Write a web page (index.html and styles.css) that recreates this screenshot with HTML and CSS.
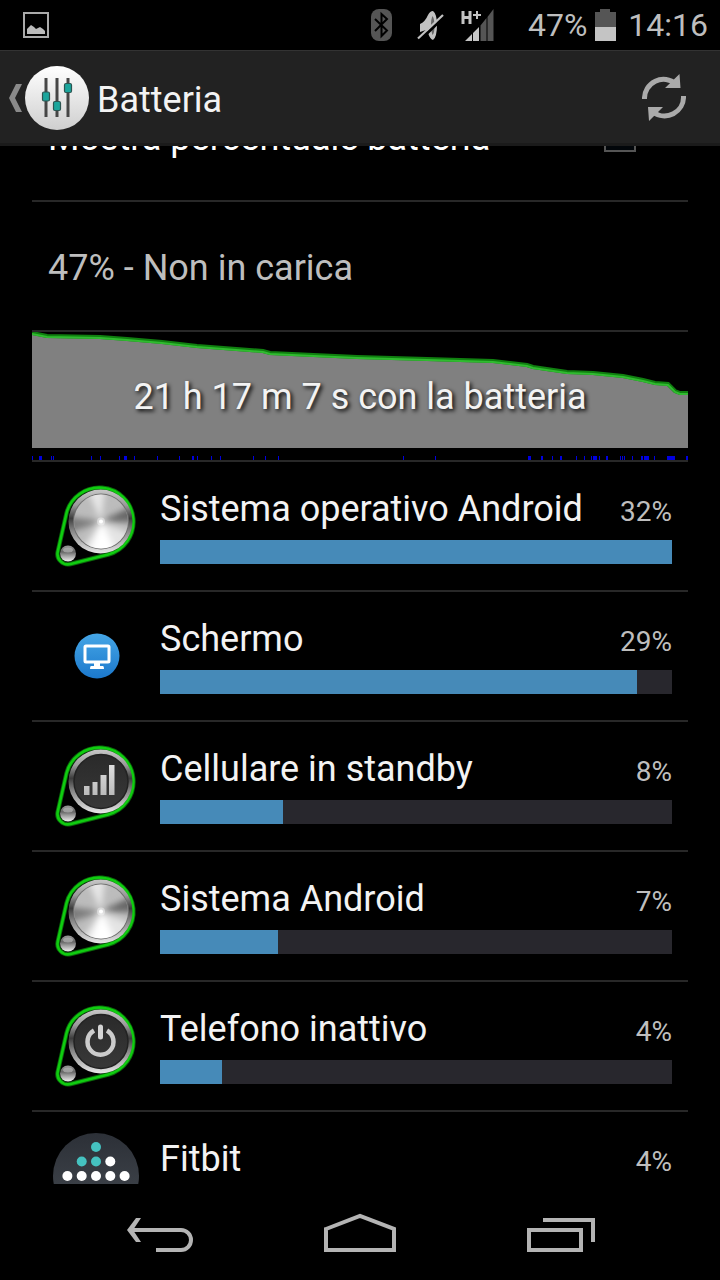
FILE: index.html
```html
<!DOCTYPE html>
<html lang="it">
<head>
  <meta charset="UTF-8" />
  <meta name="viewport" content="width=device-width, initial-scale=1.0"/>
  <title>Batteria</title>
  <link rel="stylesheet" href="styles.css">
</head>
<body>
  <!-- Shared icon parts -->
  <svg class="defs" width="0" height="0" aria-hidden="true">
    <defs>
      <linearGradient id="ring" x1="0" y1="0" x2="0" y2="1">
        <stop offset="0" stop-color="#c8c8c8"/>
        <stop offset="0.25" stop-color="#999"/>
        <stop offset="0.45" stop-color="#3c3c3c"/>
        <stop offset="0.65" stop-color="#888"/>
        <stop offset="1" stop-color="#e8e8e8"/>
      </linearGradient>
      <linearGradient id="dark" x1="0" y1="0" x2="0" y2="1">
        <stop offset="0" stop-color="#2a2a2a"/>
        <stop offset="1" stop-color="#383838"/>
      </linearGradient>
      <linearGradient id="glyph" x1="0" y1="0" x2="0" y2="1">
        <stop offset="0" stop-color="#ddd"/>
        <stop offset="1" stop-color="#bbb"/>
      </linearGradient>
      <linearGradient id="ball" x1="0" y1="0" x2="0" y2="1">
        <stop offset="0" stop-color="#999"/>
        <stop offset="0.4" stop-color="#666"/>
        <stop offset="0.6" stop-color="#999"/>
        <stop offset="1" stop-color="#eee"/>
      </linearGradient>
      <linearGradient id="blue" x1="0" y1="0" x2="0" y2="1">
        <stop offset="0" stop-color="#45a6e6"/>
        <stop offset="1" stop-color="#1b78cc"/>
      </linearGradient>
      <linearGradient id="white" x1="0" y1="0" x2="0" y2="1">
        <stop offset="0" stop-color="#fff"/>
        <stop offset="1" stop-color="#cfcfcf"/>
      </linearGradient>
      <linearGradient id="slate" x1="0" y1="0" x2="0" y2="1">
        <stop offset="0" stop-color="#2c3037"/>
        <stop offset="1" stop-color="#444950"/>
      </linearGradient>
      <filter id="soft"><feGaussianBlur stdDeviation="3"/></filter>
      <clipPath id="disc"><circle cx="53" cy="43.5" r="27"/></clipPath>

      <symbol id="knob" viewBox="0 0 96 96">
        <path d="M18.5 35.2A34 34 0 1 1 60.2 76.5L22.6 86A10.5 10.5 0 0 1 9.8 73.4Z" fill="#000" stroke="#0a6b0a" stroke-width="4.4"/>
        <path d="M18.5 35.2A34 34 0 1 1 60.2 76.5L22.6 86A10.5 10.5 0 0 1 9.8 73.4Z" fill="none" stroke="#10cc10" stroke-width="2.6"/>
        <circle cx="52.5" cy="43.5" r="32" fill="url(#ring)"/>
        <circle cx="20" cy="75.5" r="8" fill="url(#ball)"/>
        <ellipse cx="20" cy="72" rx="5" ry="2.5" fill="#b4b4b4" opacity="0.7"/>
      </symbol>

      <symbol id="steel" viewBox="0 0 96 96">
        <circle cx="53" cy="43.5" r="28" fill="#707070"/>
        <g clip-path="url(#disc)">
          <rect x="20" y="10" width="66" height="66" fill="#bcbcbc"/>
          <g filter="url(#soft)">
            <path d="M53 43.5L18 38V56Z" fill="#7c7c7c"/>
            <path d="M53 43.5L88 26V44Z" fill="#666"/>
            <path d="M53 43.5L36 4H58Z" fill="#e6e6e6"/>
            <path d="M53 43.5L24 84H84L88 58Z" fill="#e4e4e4"/>
            <path d="M53 43.5L38 84H74Z" fill="#fff"/>
          </g>
          <circle cx="53" cy="43.5" r="4" fill="#fff" opacity="0.4"/>
          <circle cx="53" cy="43.5" r="2" fill="#fff"/>
        </g>
      </symbol>
    </defs>
  </svg>

  <!-- System status bar -->
  <div class="statusbar">
    <svg width="26" height="26" viewBox="0 0 26 26" aria-hidden="true">
      <rect x="1" y="1" width="24" height="24" fill="none" stroke="#aaa" stroke-width="2"/>
      <path d="M4 22V17L6 15L8 13L11 15L13 17L17 15L20 17L22 19V22Z" fill="#bbb"/>
    </svg>
    <div class="status-icons">
      <svg width="22" height="32" viewBox="0 0 22 32" aria-hidden="true">
        <rect width="21" height="32" rx="8" fill="#555"/>
        <path d="M4 10L16 21.5L10.5 27V5L16 10L4 22" fill="none" stroke="#000" stroke-width="2"/>
      </svg>
      <svg width="28" height="32" viewBox="0 0 28 32" aria-hidden="true">
        <path d="M3 15Q8 13 11 6Q13 2 16 2Q20 5 20 16Q20 28 16 31Q13 30 11 24L9 21L3 23Z" fill="#c2c2c2"/>
        <path d="M15.5 7Q17.5 10 17.5 17T15.5 26Q14 22 14 16T15.5 7" fill="#666"/>
        <path d="M2 32L27 8" stroke="#000" stroke-width="3"/>
        <path d="M1 29.5L26 6" stroke="#c2c2c2" stroke-width="2.2"/>
      </svg>
      <svg width="33" height="32" viewBox="0 0 33 32" aria-hidden="true">
        <path d="M2 2V15M9 2V15M2 8.5H9" stroke="#c4c4c4" stroke-width="3"/>
        <path d="M12 6H20M16 2V10" stroke="#c4c4c4" stroke-width="2"/>
        <path d="M4 32L11 25V32ZM12 24L18 18V32H12Z" fill="#c4c4c4"/>
        <path d="M19.5 16.5L25.5 9V32H19.5ZM26.5 8L32.5 0V32H26.5Z" fill="#555"/>
      </svg>
      <div class="charge">
        <span>47%</span>
        <svg width="21" height="32" viewBox="0 0 21 32" aria-hidden="true">
          <path d="M0 3H5V0H15V3H21V32H0Z" fill="#555"/>
          <path d="M0 18H21V32H0Z" fill="#c4c4c4"/>
        </svg>
        <span class="clock">14:16</span>
      </div>
    </div>
  </div>

  <!-- Action bar -->
  <header class="actionbar">
    <button class="up" aria-label="Indietro">
      <svg width="14" height="28" viewBox="0 0 14 28">
        <path d="M7 0H13L6 14L13 28H7L0 14Z" fill="#8a8a8a"/>
      </svg>
      <svg width="64" height="64" viewBox="0 0 64 64">
        <circle cx="32" cy="32" r="32" fill="url(#white)"/>
        <path d="M21 12V51M32 12V51M43 12V51" stroke="#464646" stroke-width="3"/>
        <g fill="#1ba59c" stroke="#2c5552" stroke-width="1.2">
          <rect x="17.5" y="26" width="7" height="9" rx="1.5"/>
          <rect x="28.5" y="35.5" width="7" height="9" rx="1.5"/>
          <rect x="39.5" y="17.5" width="7" height="9" rx="1.5"/>
        </g>
      </svg>
    </button>
    <h1>Batteria</h1>
    <button class="refresh" aria-label="Aggiorna">
      <svg width="44" height="48" viewBox="0 0 44 48">
        <g fill="none" stroke="#aaa" stroke-width="5">
          <path d="M2.5 25A19 19 0 0 1 34 10"/>
          <path d="M41.5 22A19 19 0 0 1 11 38"/>
        </g>
        <path d="M37.5 0L38.5 14H23ZM6 33H21L7 47Z" fill="#aaa"/>
      </svg>
    </button>
  </header>

  <main class="content">
    <div class="setting">
      <label for="showPercent">Mostra percentuale batteria</label>
      <input type="checkbox" id="showPercent" />
    </div>

    <p class="summary">47% - Non in carica</p>

    <!-- Discharge history -->
    <div class="chart">
      <svg viewBox="0 0 656 128" preserveAspectRatio="none" aria-hidden="true">
        <path d="M0 2L15 5L68 6L95 8L130 11L165 15L231 20L238 22L325 26L395 28L461 30L495 34L501 36L535 41L561 42L591 45L611 49L623 52L636 53L643 60L648 62H656V116H0Z" fill="#808080"/>
        <path d="M0 1L15 4L68 5L95 7L130 10L165 14L231 19L238 21L325 25L395 27L461 29L495 33L501 35L535 40L561 41L591 44L611 48L623 51L636 52L643 59L648 61H656" fill="none" stroke="#108010" stroke-width="4"/>
        <path d="M0 2L15 5L68 6L95 8L130 11L165 15L231 20L238 22L325 26L395 28L461 30L495 34L501 36L535 41L561 42L591 45L611 49L623 52L636 53L643 60L648 62H656" fill="none" stroke="#30bb30" stroke-width="2"/>
        <path d="M0 126h1M7 126h3M19 126h1M21 126h1M59 126h1M68 126h1M87 126h1M92 126h3M102 126h1M125 126h1M147 126h1M160 126h2M165 126h1M179 126h1M188 126h1M221 126h1M233 126h1M246 126h1M371 126h1M403 126h1M496 126h3M509 126h2M520 126h1M528 126h2M544 126h1M552 126h1M559 126h1M561 126h4M567 126h1M574 126h2M588 126h1M590 126h1M592 126h1M600 126h1M609 126h2M612 126h5M622 126h1M635 126h8M654 126h2" stroke="#0000e0" stroke-width="4"/>
      </svg>
      <p>21 h 17 m 7 s con la batteria</p>
    </div>

    <ul class="usage">
      <li>
        <svg class="icon" viewBox="0 0 96 96" aria-hidden="true">
          <use href="#knob"/>
          <use href="#steel"/>
        </svg>
        <div class="info">
          <div class="line"><label for="use1">Sistema operativo Android</label><span>32%</span></div>
          <progress id="use1" max="100" value="100"></progress>
        </div>
      </li>
      <li>
        <svg class="icon" viewBox="0 0 96 96" aria-hidden="true">
          <circle cx="49" cy="48" r="22.5" fill="url(#blue)"/>
          <rect x="37" y="38" width="24" height="16" rx="1" fill="none" stroke="#fff" stroke-width="3"/>
          <path d="M46 55H52V58H55Q56 58 56 61H42Q42 58 43 58H46Z" fill="#fff"/>
        </svg>
        <div class="info">
          <div class="line"><label for="use2">Schermo</label><span>29%</span></div>
          <progress id="use2" max="100" value="93.2"></progress>
        </div>
      </li>
      <li>
        <svg class="icon" viewBox="0 0 96 96" aria-hidden="true">
          <use href="#knob"/>
          <circle cx="53" cy="43.5" r="27" fill="url(#dark)" stroke="#222" stroke-width="1.5"/>
          <path d="M36 48h5.500v9H36ZM44.500 44h5v13h-5ZM52.500 37h6v20h-6ZM61 27h5.500v30H61Z" fill="url(#glyph)"/>
        </svg>
        <div class="info">
          <div class="line"><label for="use3">Cellulare in standby</label><span>8%</span></div>
          <progress id="use3" max="100" value="24"></progress>
        </div>
      </li>
      <li>
        <svg class="icon" viewBox="0 0 96 96" aria-hidden="true">
          <use href="#knob"/>
          <use href="#steel"/>
        </svg>
        <div class="info">
          <div class="line"><label for="use4">Sistema Android</label><span>7%</span></div>
          <progress id="use4" max="100" value="23"></progress>
        </div>
      </li>
      <li>
        <svg class="icon" viewBox="0 0 96 96" aria-hidden="true">
          <use href="#knob"/>
          <circle cx="53" cy="43.5" r="27" fill="url(#dark)" stroke="#222" stroke-width="1.5"/>
          <path d="M46 32.500A13 13 0 1 0 59 32.500" fill="none" stroke="#ccc" stroke-width="4.5"/>
          <path d="M52.500 29V39" stroke="#d4d4d4" stroke-width="5" stroke-linecap="round"/>
        </svg>
        <div class="info">
          <div class="line"><label for="use5">Telefono inattivo</label><span>4%</span></div>
          <progress id="use5" max="100" value="12.1"></progress>
        </div>
      </li>
      <li>
        <svg class="icon" viewBox="0 0 96 96" aria-hidden="true">
          <circle cx="48" cy="48" r="43" fill="url(#slate)"/>
          <g fill="#45c2c0">
            <circle cx="48" cy="19" r="5"/>
            <circle cx="33.7" cy="33.5" r="5"/>
            <circle cx="48" cy="33.5" r="5"/>
          </g>
          <g fill="#fff">
            <circle cx="62.3" cy="33.5" r="5"/>
            <circle cx="19.4" cy="48" r="5"/>
            <circle cx="33.7" cy="48" r="5"/>
            <circle cx="48" cy="48" r="5"/>
            <circle cx="62.3" cy="48" r="5"/>
            <circle cx="76.6" cy="48" r="5"/>
          </g>
        </svg>
        <div class="info">
          <div class="line"><label for="use6">Fitbit</label><span>4%</span></div>
          <progress id="use6" max="100" value="12"></progress>
        </div>
      </li>
    </ul>
  </main>

  <!-- Navigation keys -->
  <nav class="navbar">
    <button aria-label="Indietro">
      <svg width="68" height="40" viewBox="0 0 68 40">
        <path d="M4 17H55A10 10 0 0 1 55 37H30" fill="none" stroke="#b4b4b4" stroke-width="4"/>
        <path d="M10 5H15L7 17L15 29H10L1 17Z" fill="#b4b4b4"/>
      </svg>
    </button>
    <button aria-label="Home">
      <svg width="72" height="40" viewBox="0 0 72 40">
        <path d="M2 16L36 3L70 16V37H2Z" fill="none" stroke="#b4b4b4" stroke-width="4"/>
      </svg>
    </button>
    <button aria-label="App recenti">
      <svg width="68" height="40" viewBox="0 0 68 40">
        <path d="M2 17H54V37H2ZM16 7H66V29" fill="none" stroke="#b4b4b4" stroke-width="4"/>
      </svg>
    </button>
  </nav>
</body>
</html>
```
FILE: styles.css
```css
* { margin: 0; padding: 0; box-sizing: border-box; }

html, body { height: 100%; }

body {
  display: flex;
  flex-direction: column;
  background: #000;
  color: #f3f3f3;
  font-family: Roboto, sans-serif;
  font-size: 36px;
  line-height: 44px;
  overflow: hidden;
}

svg { display: block; flex: none; }
.defs { position: absolute; }

button {
  background: none;
  border: none;
  color: inherit;
  cursor: pointer;
}

/* Status bar */
.statusbar {
  flex: none;
  height: 50px;
  display: flex;
  align-items: center;
  justify-content: space-between;
  padding: 0 12px 0 23px;
  color: #bebebe;
  font-size: 32px;
}
.status-icons { display: flex; align-items: center; gap: 16px; }
.status-icons > svg:first-child { margin-right: 8px; }
.charge { display: flex; align-items: center; gap: 8px; margin-left: 18px; }
.clock { margin-left: 4px; }

/* Action bar */
.actionbar {
  flex: none;
  height: 96px;
  display: flex;
  align-items: center;
  padding: 2px 34px 0 9px;
  background: #222;
  border-top: 1px solid #333;
  border-bottom: 3px solid #1b1b1b;
}
.actionbar h1 { font-size: 36px; font-weight: 400; margin-left: 8px; padding-top: 4px; }
.up { display: flex; align-items: center; gap: 2px; }
.refresh { margin-left: auto; }

/* Scrolling content */
.content { flex: 1; min-height: 0; overflow: hidden; padding: 0 32px; }

.setting {
  display: flex;
  align-items: flex-end;
  justify-content: space-between;
  height: 56px;
  padding: 0 52px 40px 16px;
  overflow: hidden;
  border-bottom: 2px solid #282828;
  color: #fff;
}
.setting input {
  appearance: none;
  width: 32px;
  height: 32px;
  margin-bottom: 8px;
  border: 2px solid #555;
  background: #02060a;
}

.summary {
  height: 130px;
  padding: 44px 16px 0;
  border-bottom: 2px solid #282828;
  color: #bebebe;
}

/* Battery history chart */
.chart { position: relative; height: 130px; border-bottom: 2px solid #282828; }
.chart svg { width: 100%; height: 128px; }
.chart p {
  position: absolute;
  inset: 0;
  display: flex;
  align-items: center;
  justify-content: center;
  padding-top: 2px;
  text-shadow: 2px 2px 4px #000;
}

/* Usage list */
.usage { list-style: none; }
.usage li {
  display: flex;
  align-items: center;
  gap: 16px;
  height: 130px;
  padding: 0 16px;
  border-bottom: 2px solid #282828;
}
.icon { width: 96px; height: 96px; }
.info { flex: 1; min-width: 0; }
.line { display: flex; align-items: baseline; justify-content: space-between; }
.line span { font-size: 28px; color: #bebebe; }

progress {
  appearance: none;
  display: block;
  width: 100%;
  height: 24px;
  margin: 6px 0 2px;
  border: none;
  background: #28272d;
}
progress::-webkit-progress-bar { background: #28272d; }
progress::-webkit-progress-value { background: #468ab8; }

/* Navigation bar */
.navbar {
  flex: none;
  height: 96px;
  display: flex;
  padding: 2px 59px 0 60px;
}
.navbar button { flex: 1; display: flex; align-items: center; justify-content: center; }
```
